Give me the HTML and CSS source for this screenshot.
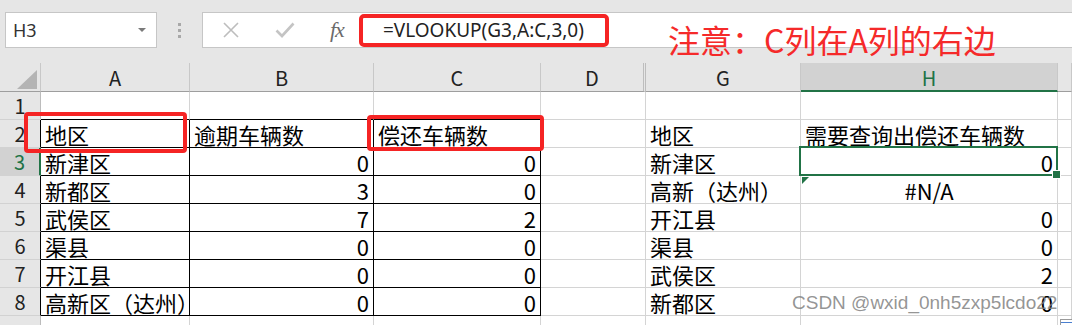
FILE: index.html
```html
<!DOCTYPE html>
<html lang="zh-CN">
<head>
    <meta charset="UTF-8">
    <title>VLOOKUP</title>
    <link rel="stylesheet" href="styles.css">
</head>
<body>
<div class="app">
    <div class="toolbar">
        <div class="namebox">
            <span class="cellref">H3</span>
            <span class="caret"></span>
        </div>
        <div class="grip"><i></i><i></i><i></i></div>
        <div class="formulabar">
            <svg class="tool cancel" width="18" height="18" viewBox="0 0 18 18">
                <path d="M2 2 L16 16 M16 2 L2 16" stroke="#bdbdbd" stroke-width="1.6" fill="none"/>
            </svg>
            <svg class="tool enter" width="20" height="18" viewBox="0 0 20 18">
                <path d="M1.5 9.5 L7 15 L18.5 2.5" stroke="#c4c4c4" stroke-width="2.6" fill="none"/>
            </svg>
            <span class="fx">fx</span>
            <span class="formula">=VLOOKUP(G3,A:C,3,0)</span>
        </div>
    </div>

    <div class="sheet">
        <!-- 列标题 -->
        <div class="hd corner"><span class="selall"></span></div>
        <div class="hd">A</div>
        <div class="hd">B</div>
        <div class="hd">C</div>
        <div class="hd hidden-next">D</div>
        <div class="hd">G</div>
        <div class="hd cur">H</div>
        <div class="hd"></div>

        <!-- 1 -->
        <div class="rn">1</div>
        <div class="cell kt"></div>
        <div class="cell kt"></div>
        <div class="cell kt"></div>
        <div class="cell"></div>
        <div class="cell"></div>
        <div class="cell"></div>
        <div class="cell"></div>

        <!-- 2 -->
        <div class="rn k">2</div>
        <div class="cell k">地区</div>
        <div class="cell k">逾期车辆数</div>
        <div class="cell k">偿还车辆数</div>
        <div class="cell"></div>
        <div class="cell">地区</div>
        <div class="cell">需要查询出偿还车辆数</div>
        <div class="cell"></div>

        <!-- 3 -->
        <div class="rn cur">3</div>
        <div class="cell k">新津区</div>
        <div class="cell k r">0</div>
        <div class="cell k r">0</div>
        <div class="cell"></div>
        <div class="cell">新津区</div>
        <div class="cell r sel">0<span class="handle"></span></div>
        <div class="cell"></div>

        <!-- 4 -->
        <div class="rn k">4</div>
        <div class="cell k">新都区</div>
        <div class="cell k r">3</div>
        <div class="cell k r">0</div>
        <div class="cell"></div>
        <div class="cell">高新（达州）</div>
        <div class="cell m flag">#N/A</div>
        <div class="cell"></div>

        <!-- 5 -->
        <div class="rn k">5</div>
        <div class="cell k">武侯区</div>
        <div class="cell k r">7</div>
        <div class="cell k r">2</div>
        <div class="cell"></div>
        <div class="cell">开江县</div>
        <div class="cell r">0</div>
        <div class="cell"></div>

        <!-- 6 -->
        <div class="rn k">6</div>
        <div class="cell k">渠县</div>
        <div class="cell k r">0</div>
        <div class="cell k r">0</div>
        <div class="cell"></div>
        <div class="cell">渠县</div>
        <div class="cell r">0</div>
        <div class="cell"></div>

        <!-- 7 -->
        <div class="rn k">7</div>
        <div class="cell k">开江县</div>
        <div class="cell k r">0</div>
        <div class="cell k r">0</div>
        <div class="cell"></div>
        <div class="cell">武侯区</div>
        <div class="cell r">2</div>
        <div class="cell"></div>

        <!-- 8 -->
        <div class="rn k">8</div>
        <div class="cell k">高新区（达州）</div>
        <div class="cell k r">0</div>
        <div class="cell k r">0</div>
        <div class="cell"></div>
        <div class="cell">新都区</div>
        <div class="cell r">0</div>
        <div class="cell"></div>

        <!-- 9 (只露出顶部) -->
        <div class="rn last"></div>
        <div class="cell last"></div>
        <div class="cell last"></div>
        <div class="cell last"></div>
        <div class="cell last"></div>
        <div class="cell last"></div>
        <div class="cell last"></div>
        <div class="cell last"><span class="qa"></span></div>

        <!-- 标注框 -->
        <div class="mark mark-a2"></div>
        <div class="mark mark-c2"></div>
    </div>

    <div class="note">注意：C列在A列的右边</div>
    <div class="watermark">CSDN @wxid_0nh5zxp5lcdo22</div>
</div>
</body>
</html>
```

FILE: styles.css
```css
html, body {
    margin: 0;
    padding: 0;
}
body {
    width: 1072px;
    height: 325px;
    overflow: hidden;
    background-color: #e6e6e6;
    font-family: "Noto Sans CJK SC", "Noto Sans", sans-serif;
    color: #000;
}
.app {
    position: relative;
    width: 1072px;
    height: 325px;
    overflow: hidden;
}

/* 顶部编辑栏 */
.toolbar {
    height: 63px;
    display: flex;
    align-items: flex-start;
    box-sizing: border-box;
    padding-top: 12px;
}
.namebox {
    margin-left: 5px;
    width: 152px;
    height: 36px;
    box-sizing: border-box;
    background-color: #fff;
    border: 1px solid #c6c6c6;
    display: flex;
    align-items: center;
    justify-content: space-between;
    padding: 0 10px 0 7px;
}
.cellref {
    font-family: "Noto Sans", sans-serif;
    font-size: 18px;
    color: #333;
}
.caret {
    width: 0;
    height: 0;
    border-left: 4px solid transparent;
    border-right: 4px solid transparent;
    border-top: 4px solid #7a7a7a;
}
.grip {
    width: 45px;
    height: 36px;
    display: flex;
    flex-direction: column;
    align-items: center;
    justify-content: center;
    gap: 3px;
}
.grip i {
    display: block;
    width: 3px;
    height: 3px;
    background-color: #a8a8a8;
}
.formulabar {
    flex: 1;
    height: 36px;
    box-sizing: border-box;
    background-color: #fff;
    border: 1px solid #c6c6c6;
    border-right: none;
    display: flex;
    align-items: center;
}
.tool {
    display: block;
    flex: none;
}
.cancel {
    margin-left: 19px;
}
.enter {
    margin-left: 35px;
}
.fx {
    margin-left: 35px;
    font-family: "Liberation Serif", serif;
    font-style: italic;
    font-size: 22px;
    color: #6b6b6b;
    letter-spacing: -1px;
}
.formula {
    margin-left: 15px;
    width: 250px;
    height: 33px;
    box-sizing: border-box;
    border: 4px solid #f52424;
    border-radius: 5px;
    padding-left: 20px;
    display: flex;
    align-items: center;
    font-family: "Noto Sans", sans-serif;
    font-size: 19px;
    color: #222;
}

/* 表格 */
.sheet {
    position: relative;
    display: grid;
    grid-template-columns: 41px 149px 184px 167px 105px 155px 257px 1fr;
    grid-template-rows: 29px repeat(8, 28px) 9px;
}
.hd {
    box-sizing: border-box;
    background-color: #e6e6e6;
    border-right: 1px solid #c8c8c8;
    border-bottom: 1px solid #9e9e9e;
    display: flex;
    align-items: center;
    justify-content: center;
    font-size: 20px;
    color: #222;
    padding-top: 1px;
}
.hd.hidden-next {
    border-right: 3px double #bdbdbd;
}
.hd.cur {
    background-color: #d2d2d2;
    color: #217346;
    border-bottom: 2px solid #217346;
}
.corner {
    position: relative;
}
.selall {
    position: absolute;
    right: 3px;
    bottom: 2px;
    width: 0;
    height: 0;
    border-left: 20px solid transparent;
    border-bottom: 19px solid #b4b4b4;
}
.rn {
    box-sizing: border-box;
    background-color: #e6e6e6;
    border-right: 1px solid #bcbcbc;
    border-bottom: 1px solid #d2d2d2;
    display: flex;
    align-items: center;
    justify-content: center;
    font-size: 20px;
    color: #222;
}
.rn.k {
    border-right-color: #000;
}
.rn.cur {
    background-color: #d2d2d2;
    color: #217346;
    border-right: 2px solid #217346;
}
.cell {
    position: relative;
    box-sizing: border-box;
    background-color: #fff;
    border-right: 1px solid #d4d4d4;
    border-bottom: 1px solid #d4d4d4;
    display: flex;
    align-items: flex-end;
    padding: 0 4px 0 4px;
    font-size: 22px;
    line-height: 26px;
    white-space: nowrap;
}
.cell.r {
    justify-content: flex-end;
}
.cell.m {
    justify-content: center;
}
.cell.k {
    border-right-color: #000;
    border-bottom-color: #000;
}
.cell.kt {
    border-bottom-color: #000;
}
.last {
    border-bottom: none;
}

/* 选中单元格 */
.sel::after {
    content: "";
    position: absolute;
    left: -2px;
    top: -2px;
    right: -1px;
    bottom: -1px;
    border: 2px solid #217346;
    pointer-events: none;
}
.handle {
    position: absolute;
    right: -4px;
    bottom: -4px;
    width: 7px;
    height: 7px;
    background-color: #217346;
    border: 1px solid #fff;
    z-index: 2;
}
.flag::before {
    content: "";
    position: absolute;
    left: 1px;
    top: 1px;
    width: 0;
    height: 0;
    border-top: 7px solid #217346;
    border-right: 7px solid transparent;
}
.qa {
    position: absolute;
    left: 2px;
    top: 3px;
    width: 14px;
    height: 10px;
    box-sizing: border-box;
    border: 1px solid #9a9a9a;
    background: linear-gradient(#fff 2px, #4a7fd0 2px, #4a7fd0 3px, #fff 3px);
}

/* 红色标注 */
.mark {
    position: absolute;
    box-sizing: border-box;
    border: 4px solid #f52424;
    border-radius: 4px;
}
.mark-a2 {
    left: 24px;
    top: 49px;
    width: 163px;
    height: 41px;
}
.mark-c2 {
    left: 367px;
    top: 52px;
    width: 177px;
    height: 36px;
}
.note {
    position: absolute;
    left: 668px;
    top: 22px;
    font-size: 32px;
    line-height: 35px;
    color: #f52a2a;
    white-space: nowrap;
}
.watermark {
    position: absolute;
    left: 792px;
    top: 291px;
    font-family: "Liberation Sans", sans-serif;
    font-size: 19px;
    line-height: 24px;
    color: rgba(130, 130, 130, 0.85);
    white-space: nowrap;
}
```
